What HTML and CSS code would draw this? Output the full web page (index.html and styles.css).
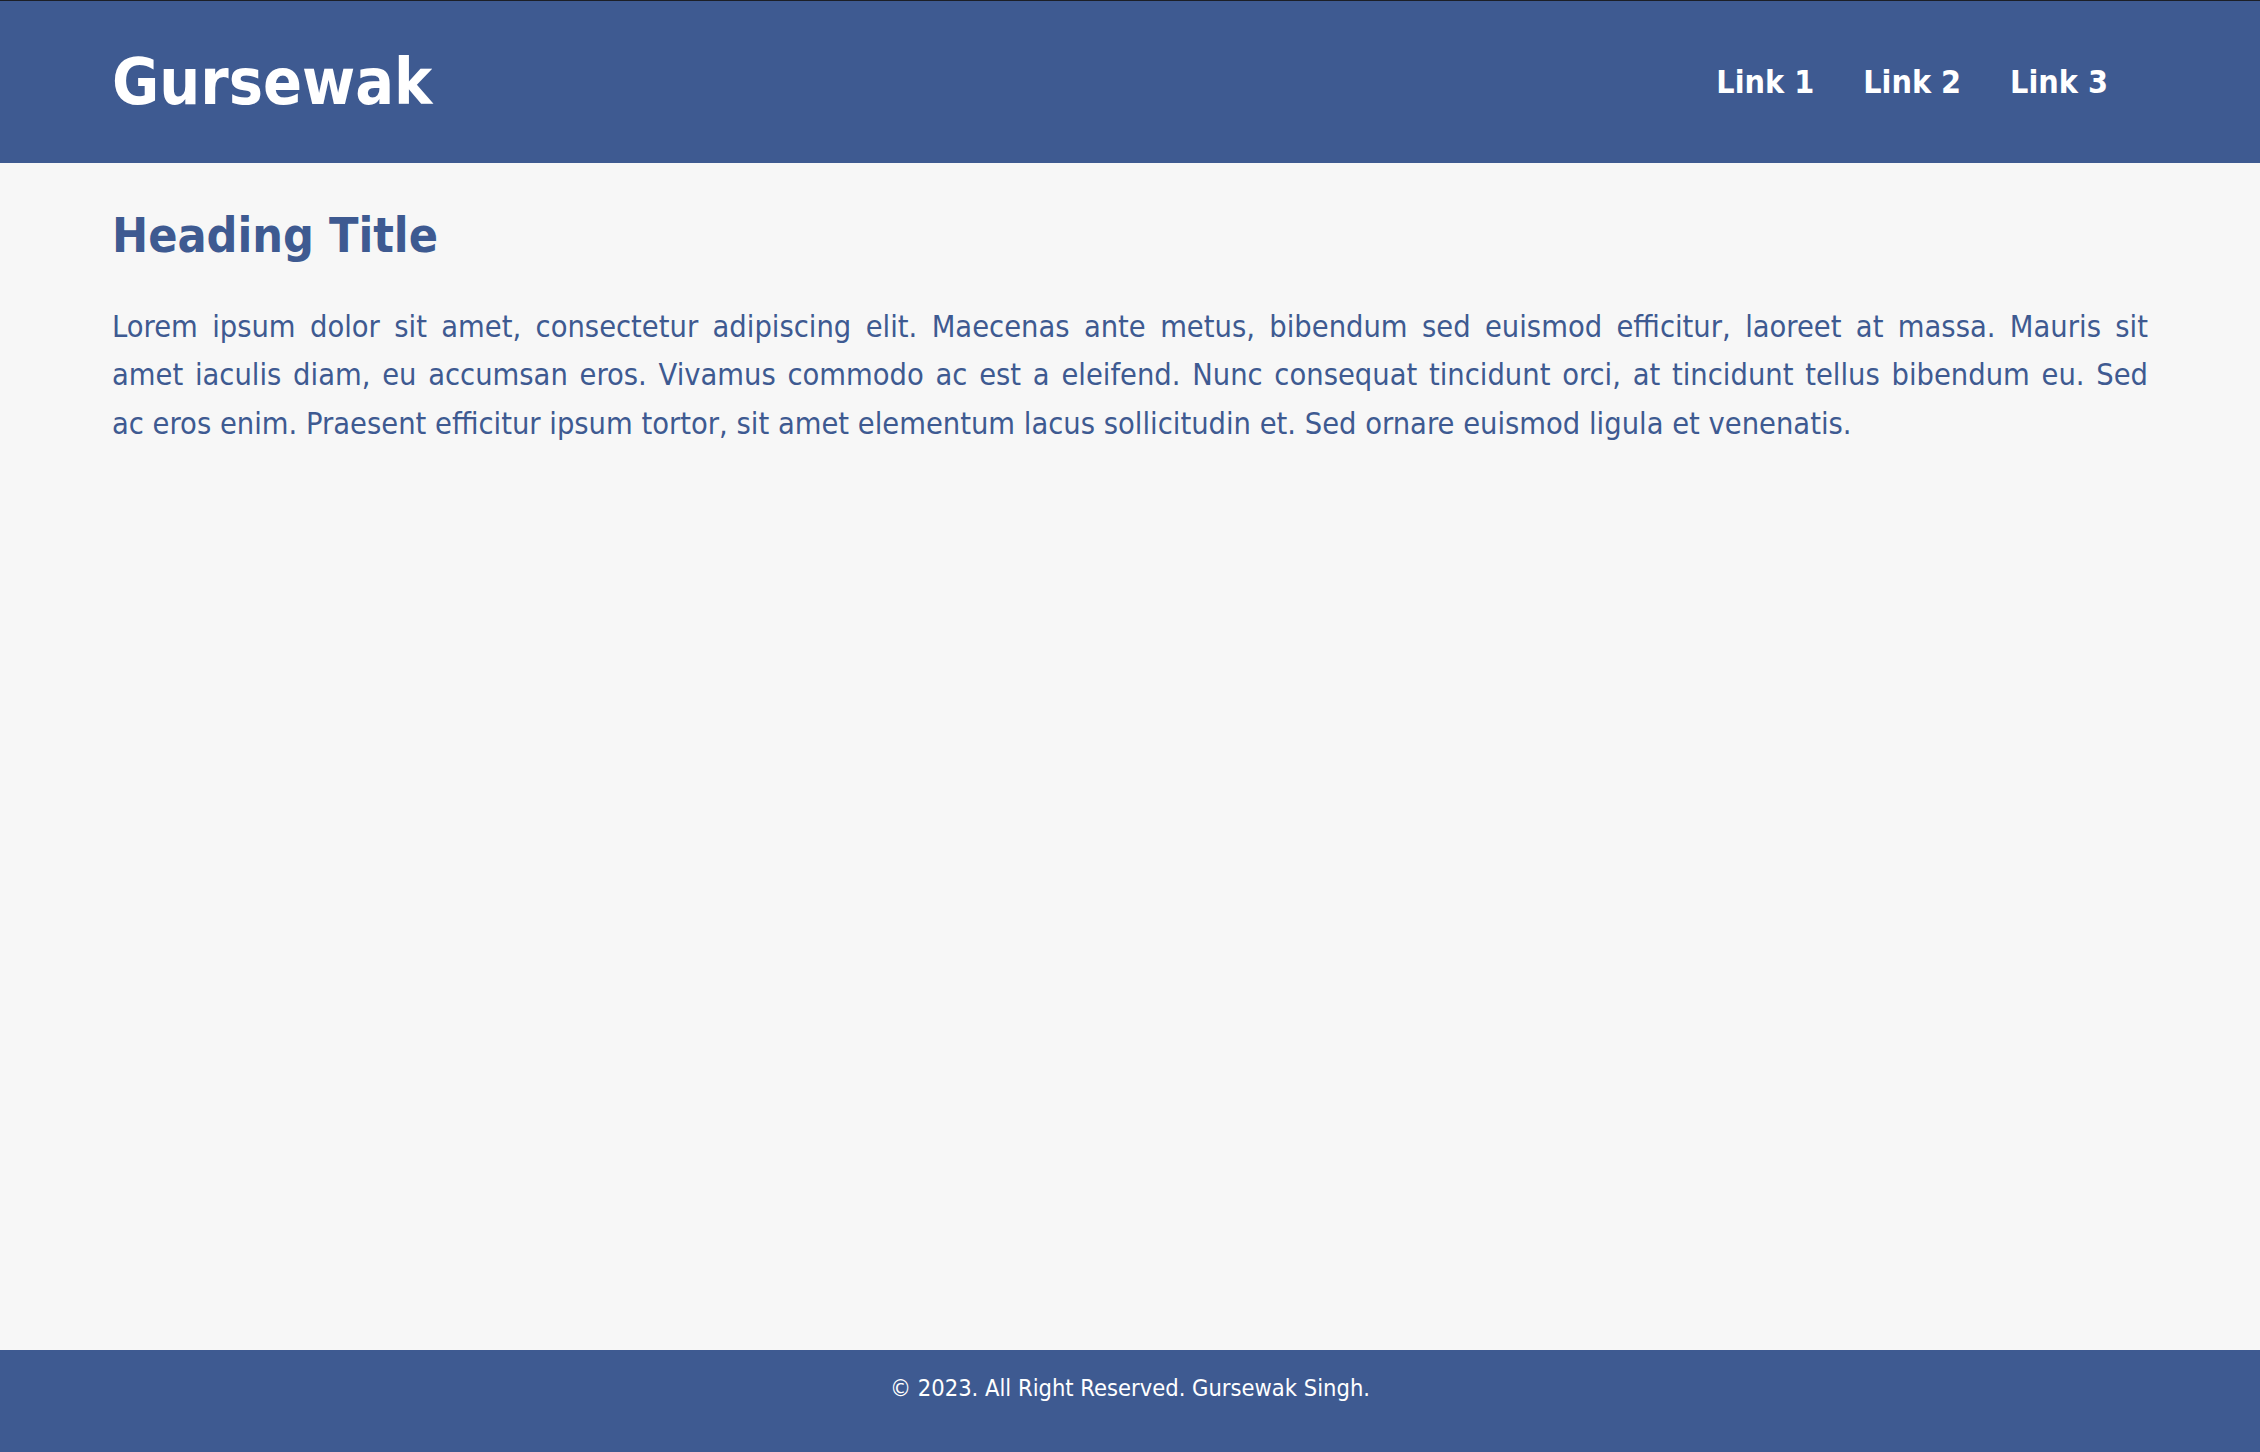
FILE: index.html
```html
<!DOCTYPE html>
<html lang="en">
<head>
<meta charset="utf-8">
<title>Gursewak</title>
<link rel="stylesheet" href="styles.css">
</head>
<body>
<div class="page">
  <header class="site-header">
    <div class="logo">Gursewak</div>
    <nav class="nav">
      <a class="nav-link" href="#">Link 1</a>
      <a class="nav-link" href="#">Link 2</a>
      <a class="nav-link" href="#">Link 3</a>
    </nav>
  </header>
  <main class="content">
    <h1 class="title">Heading Title</h1>
    <p class="text"><span class="line">Lorem ipsum dolor sit amet, consectetur adipiscing elit. Maecenas ante metus, bibendum sed euismod efficitur, laoreet at massa. Mauris sit</span> <span class="line">amet iaculis diam, eu accumsan eros. Vivamus commodo ac est a eleifend. Nunc consequat tincidunt orci, at tincidunt tellus bibendum eu. Sed</span> <span class="line line-last">ac eros enim. Praesent efficitur ipsum tortor, sit amet elementum lacus sollicitudin et. Sed ornare euismod ligula et venenatis.</span></p>
  </main>
  <footer class="site-footer">
    <p class="copy">© 2023. All Right Reserved. Gursewak Singh.</p>
  </footer>
</div>
</body>
</html>
```

FILE: styles.css
```css
html, body {
  margin: 0;
  padding: 0;
  height: 100%;
}
body {
  background: #f7f7f7;
  font-family: "DejaVu Sans Condensed", "DejaVu Sans", sans-serif;
  color: #3e5a91;
}
.page {
  min-height: 100vh;
  display: flex;
  flex-direction: column;
}
.site-header {
  height: 162px;
  border-top: 1px solid #1c1f26;
  background: #3e5a91;
  display: flex;
  align-items: center;
  justify-content: space-between;
  padding: 0 152px 0 112px;
}
.logo {
  color: #fff;
  font-weight: bold;
  font-size: 64px;
  line-height: 1;
}
.nav {
  display: flex;
  gap: 49px;
}
.nav-link {
  color: #fff;
  text-decoration: none;
  font-weight: bold;
  font-size: 32px;
  line-height: 1;
}
.content {
  flex: 1;
  padding: 0 112px;
}
.title {
  margin: 44px 0 0;
  font-size: 48px;
  line-height: 1.2;
  font-weight: bold;
}
.text {
  margin: 38px 0 0;
  font-size: 30.5px;
  line-height: 48.5px;
  text-align: justify;
}
.line {
  display: block;
  text-align-last: justify;
}
.line-last {
  text-align-last: auto;
}
.site-footer {
  height: 102px;
  box-sizing: border-box;
  padding-top: 24px;
  background: #3e5a91;
  text-align: center;
}
.copy {
  margin: 0;
  color: #fff;
  font-size: 23.5px;
  line-height: 28px;
}
```
